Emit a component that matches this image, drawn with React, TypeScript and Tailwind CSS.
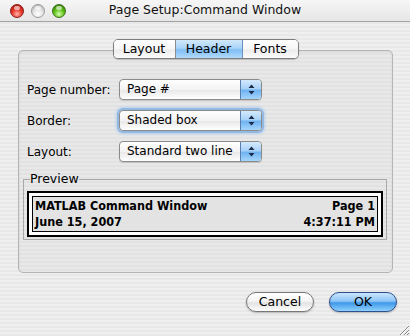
import React from 'react';

const stripes =
  'bg-[repeating-linear-gradient(180deg,#efefef_0px,#efefef_2px,#e8e8e8_2px,#e8e8e8_4px)]';

const Light = ({ color }: { color: 'red' | 'gray' | 'green' }) => {
  const fill =
    color === 'red'
      ? 'bg-[radial-gradient(circle_at_50%_75%,#ffb3a8_0%,#e8392c_45%,#9c0f08_100%)] border-[#8a1d16]'
      : color === 'green'
        ? 'bg-[radial-gradient(circle_at_50%_75%,#d8ffb0_0%,#5dc317_45%,#2c6d05_100%)] border-[#3b6d1b]'
        : 'bg-[radial-gradient(circle_at_50%_75%,#ffffff_0%,#e4e4e4_45%,#a8a8a8_100%)] border-[#9a9a9a]';
  return (
    <div className={`relative w-[14px] h-[14px] rounded-full border ${fill}`}>
      <div className="absolute left-[3px] top-[1px] w-[6px] h-[4px] rounded-full bg-white/60" />
    </div>
  );
};

const Arrows = () => (
  <svg width="7" height="11" viewBox="0 0 7 11">
    <path d="M3.5 0.5 L6.5 4 L0.5 4 Z" fill="#1c2a48" />
    <path d="M3.5 10.5 L6.5 7 L0.5 7 Z" fill="#1c2a48" />
  </svg>
);

const Popup = ({ value, focused }: { value: string; focused?: boolean }) => (
  <div
    className={`flex w-[143px] h-[21px] rounded-[4px] border border-[#8b8b8b] overflow-hidden bg-[linear-gradient(180deg,#ffffff_0%,#f3f3f3_50%,#e9e9e9_55%,#ffffff_100%)] ${
      focused ? 'shadow-[0_0_0_2px_#93b9e3,0_0_3px_3px_#b5d0ee]' : 'shadow-[0_1px_1px_rgba(0,0,0,0.15)]'
    }`}
  >
    <div className="flex-1 pl-[7px] text-[12px] leading-[19px] whitespace-nowrap overflow-hidden">{value}</div>
    <div className="w-[21px] flex items-center justify-center border-l border-[#5a7db0] bg-[linear-gradient(180deg,#d4eafd_0%,#a9d2f8_45%,#6fb3f1_55%,#a6d6fc_100%)]">
      <Arrows />
    </div>
  </div>
);

const Row = ({ label, value, focused }: { label: string; value: string; focused?: boolean }) => (
  <div className="flex items-center">
    <div className="w-[92px] text-[12px]">{label}</div>
    <Popup value={value} focused={focused} />
  </div>
);

const Tab = ({ label, active, w, last }: { label: string; active?: boolean; w: string; last?: boolean }) => (
  <div
    className={`${w} h-full flex items-center justify-center text-[12.5px] ${last ? '' : 'border-r border-[#8c8c8c]'} ${
      active
        ? 'bg-[linear-gradient(180deg,#d3e9fc_0%,#a9d3f9_45%,#80bdf3_55%,#b2dafc_100%)] border-r-[#6d8fbf]'
        : 'bg-[linear-gradient(180deg,#ffffff_0%,#f6f6f6_50%,#ececec_55%,#fbfbfb_100%)]'
    }`}
  >
    {label}
  </div>
);

const Button = ({ label, primary }: { label: string; primary?: boolean }) => (
  <div
    className={`w-[68px] h-[20px] rounded-full border flex items-center justify-center text-[12.5px] shadow-[0_1px_2px_rgba(0,0,0,0.25)] ${
      primary
        ? 'border-[#2f4f8f] bg-[linear-gradient(180deg,#c9e5fd_0%,#8fc6f6_45%,#3f98ea_55%,#8ed1fd_100%)]'
        : 'border-[#777] bg-[linear-gradient(180deg,#ffffff_0%,#f4f4f4_45%,#e3e3e3_55%,#fdfdfd_100%)]'
    }`}
  >
    {label}
  </div>
);

export default function App() {
  return (
    <div
      className={`relative w-[410px] h-[336px] overflow-hidden text-black font-['DejaVu_Sans',sans-serif] ${stripes}`}
    >
      <div className="relative flex items-center h-[22px] border-b border-[#a3a3a3] bg-[linear-gradient(180deg,#f6f6f6_0%,#e6e6e6_100%)]">
        <div className="flex items-center gap-[7px] pl-[10px]">
          <Light color="red" />
          <Light color="gray" />
          <Light color="green" />
        </div>
        <div className="absolute inset-0 flex items-center justify-center text-[12.5px] text-[#111]">
          Page Setup:Command Window
        </div>
      </div>

      <div className="pl-[18px] pr-[17px]">
        <div className="relative z-10 flex justify-center pt-[17px] -mb-[9px]">
          <div className="flex h-[20px] rounded-[5px] border border-[#7d7d7d] overflow-hidden shadow-[0_1px_1px_rgba(0,0,0,0.2)]">
            <Tab label="Layout" w="w-[62px]" />
            <Tab label="Header" w="w-[67px]" active />
            <Tab label="Fonts" w="w-[55px]" last />
          </div>
        </div>

        <div className="h-[223px] rounded-[5px] border border-[#b4b4b4] bg-[repeating-linear-gradient(180deg,#e8e8e8_0px,#e8e8e8_2px,#e2e2e2_2px,#e2e2e2_4px)] shadow-[inset_0_1px_2px_rgba(0,0,0,0.08)]">
          <div className="flex flex-col gap-[10px] pt-[28px] pl-[8px]">
            <Row label="Page number:" value="Page #" />
            <Row label="Border:" value="Shaded box" focused />
            <Row label="Layout:" value="Standard two line" />
          </div>

          <fieldset className="mt-[10px] ml-[4px] mr-[5px] border border-[#a9a9a9] pl-[3px] pr-[3px] pb-[2px]">
            <legend className="ml-[3px] text-[12.5px] leading-[14px]">Preview</legend>
            <div className="mt-[5px] border-2 border-black bg-white p-[3px]">
              <div className="border border-black bg-[#e3e3e3] px-[2px] py-[1px] font-['DejaVu_Sans_Condensed','DejaVu_Sans',sans-serif] text-[12.5px] font-bold leading-[16px]">
                <div className="flex justify-between">
                  <span>MATLAB Command Window</span>
                  <span>Page 1</span>
                </div>
                <div className="flex justify-between">
                  <span>June 15, 2007</span>
                  <span>4:37:11 PM</span>
                </div>
              </div>
            </div>
          </fieldset>
        </div>
      </div>

      <div className="flex justify-end gap-[15px] pr-[13px] mt-[19px]">
        <Button label="Cancel" />
        <Button label="OK" primary />
      </div>

      <svg className="absolute right-0 bottom-0" width="13" height="13" viewBox="0 0 13 13">
        <path d="M12 3 L3 12 M12 7 L7 12 M12 10 L10 12" stroke="#8a8a8a" strokeWidth="1" />
        <path d="M12 4 L4 12 M12 8 L8 12" stroke="#ffffff" strokeWidth="1" />
      </svg>
    </div>
  );
}
